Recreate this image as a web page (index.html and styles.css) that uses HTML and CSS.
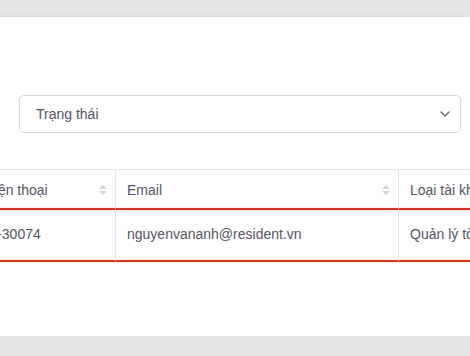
FILE: index.html
```html
<!DOCTYPE html>
<html lang="vi">
<head>
    <meta charset="UTF-8">
    <title>Tài khoản</title>
    <link rel="stylesheet" href="styles.css">
</head>
<body>
<div class="card">
    <div class="filterRow">
        <div class="selectBox">
            <span class="selectText">Trạng thái</span>
            <svg class="chevron" width="10" height="6" viewBox="0 0 10 6">
                <path d="M1 1 L5 5 L9 1" fill="none" stroke="#6b6b76" stroke-width="1.5" stroke-linecap="round" stroke-linejoin="round"/>
            </svg>
        </div>
    </div>
    <div class="tableWrap">
        <table class="dataTable">
            <thead>
            <tr>
                <th class="colPhone"><div class="thIn"><span>Số điện thoại</span><i class="sortIcon"></i></div></th>
                <th class="colEmail"><div class="thIn"><span>Email</span><i class="sortIcon"></i></div></th>
                <th class="colType"><div class="thIn"><span>Loại tài khoản</span></div></th>
            </tr>
            </thead>
            <tbody>
            <tr class="active">
                <td>0912-30074</td>
                <td>nguyenvananh@resident.vn</td>
                <td>Quản lý tòa nhà</td>
            </tr>
            </tbody>
        </table>
    </div>
</div>
</body>
</html>
```
FILE: styles.css
```css
body {
    margin: 0;
    padding-top: 17px;
    background: #e4e4e4;
    font-family: "Liberation Sans", Arial, sans-serif;
    font-size: 14px;
    color: #55555f;
    overflow: hidden;
}

.card {
    height: 319px;
    background: #fff;
    box-shadow: 0 2px 6px rgba(0,0,0,0.14);
    box-sizing: border-box;
    padding-top: 78px;
}

.filterRow {
    padding-left: 19px;
}

.selectBox {
    width: 442px;
    height: 38px;
    box-sizing: border-box;
    border: 1px solid #d7d7df;
    border-radius: 5px;
    display: flex;
    align-items: center;
    justify-content: space-between;
    padding: 0 10px 0 16px;
}

.selectText {
    color: #55555f;
}

.tableWrap {
    margin-top: 36px;
    overflow: hidden;
    width: 470px;
}

.dataTable {
    margin-left: -45px;
    border-collapse: separate;
    border-spacing: 0;
    table-layout: fixed;
    width: 700px;
    border-top: 1px solid #e6e6ec;
}

.colPhone {
    width: 160px;
}
.colEmail {
    width: 282px;
}

.dataTable th {
    height: 38px;
    padding: 0;
    font-weight: normal;
    text-align: left;
    border-right: 1px solid #e6e6ec;
    border-bottom: 2px solid #f22a12;
}

.thIn {
    display: flex;
    align-items: center;
    justify-content: space-between;
    height: 38px;
    padding: 1px 8px 0 11px;
    box-sizing: border-box;
}

.sortIcon {
    display: inline-block;
    width: 8px;
    height: 10px;
    position: relative;
}
.sortIcon:before,
.sortIcon:after {
    content: '';
    position: absolute;
    left: 0;
    border-left: 4px solid transparent;
    border-right: 4px solid transparent;
}
.sortIcon:before {
    top: 0;
    border-bottom: 4px solid #d3d3da;
}
.sortIcon:after {
    bottom: 0;
    border-top: 4px solid #d3d3da;
}

.dataTable td {
    height: 46px;
    padding: 0 11px 3px;
    white-space: nowrap;
    overflow: hidden;
    border-right: 1px solid #e6e6ec;
    border-top: 1px solid #e6e6ec;
    border-bottom: 2px solid #f22a12;
}
```
